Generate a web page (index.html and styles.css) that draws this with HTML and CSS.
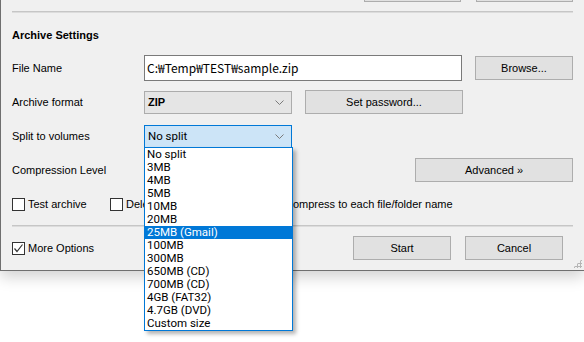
FILE: index.html
```html
<!DOCTYPE html>
<html lang="en">

<head>
    <meta charset="UTF-8">
    <meta name="viewport" content="width=device-width, initial-scale=1.0">
    <title>Archive Settings</title>
    <link rel="stylesheet" href="styles.css">
</head>

<body>
    <div class="dialog">
        <div class="content">
            <div class="top-buttons">
                <button class="btn">OK</button>
                <button class="btn">Close</button>
            </div>
            <div class="sep"></div>

            <h2 class="group-title">Archive Settings</h2>

            <div class="row">
                <span class="label">File Name</span>
                <div class="textbox">C:₩Temp₩TEST₩sample.zip</div>
                <button class="btn browse">Browse...</button>
            </div>
            <div class="row">
                <span class="label">Archive format</span>
                <div class="combo">
                    <span>ZIP</span>
                    <svg class="chevron" width="9" height="5" viewBox="0 0 9 5"><polyline points="0.5,0.5 4.5,4.5 8.5,0.5" /></svg>
                </div>
                <button class="btn password">Set password...</button>
            </div>
            <div class="row">
                <span class="label">Split to volumes</span>
                <div class="combo-wrap">
                    <div class="combo focused">
                        <span>No split</span>
                        <svg class="chevron" width="9" height="5" viewBox="0 0 9 5"><polyline points="0.5,0.5 4.5,4.5 8.5,0.5" /></svg>
                    </div>
                    <ul class="dropdown">
                        <li>No split</li>
                        <li>3MB</li>
                        <li>4MB</li>
                        <li>5MB</li>
                        <li>10MB</li>
                        <li>20MB</li>
                        <li class="selected">25MB (Gmail)</li>
                        <li>100MB</li>
                        <li>300MB</li>
                        <li>650MB (CD)</li>
                        <li>700MB (CD)</li>
                        <li>4GB (FAT32)</li>
                        <li>4.7GB (DVD)</li>
                        <li>Custom size</li>
                    </ul>
                </div>
            </div>
            <div class="row">
                <span class="label">Compression Level</span>
                <button class="btn advanced">Advanced »</button>
            </div>
            <div class="row checks">
                <label class="check test"><span class="box"></span>Test archive</label>
                <label class="check delete"><span class="box"></span>Delete</label>
                <label class="check each"><span class="box"></span>Compress to each file/folder name</label>
            </div>

            <div class="sep bottom-sep"></div>

            <div class="footer">
                <label class="check"><span class="box checked">
                    <svg width="11" height="11" viewBox="0 0 11 11"><polyline points="1.5,5.5 4,8.5 9.5,1.5" /></svg>
                </span>More Options</label>
                <div class="footer-buttons">
                    <button class="btn">Start</button>
                    <button class="btn">Cancel</button>
                </div>
            </div>
        </div>
        <div class="grip"></div>
    </div>
</body>

</html>
```

FILE: styles.css
```css
* {
    margin: 0;
    padding: 0;
    box-sizing: border-box;
}

body {
    min-height: 342px;
    background-color: #ffffff;
    font-family: "Liberation Sans", Arial, sans-serif;
    font-size: 11px;
    color: #000000;
}

.dialog {
    display: flow-root;
    position: relative;
    width: 584px;
    height: 271px;
    background-color: #f0f0f0;
    border-left: 1px solid #6f6f6f;
    border-bottom: 1px solid #6f6f6f;
    box-shadow: 0 6px 14px rgba(0, 0, 0, 0.18);
}

.content {
    width: 561px;
    margin-left: 11px;
}

.btn {
    height: 24px;
    width: 98px;
    background-color: #e1e1e1;
    border: 1px solid #adadad;
    font-family: "Liberation Sans", Arial, sans-serif;
    font-size: 11px;
    color: #000000;
}

.top-buttons {
    display: flex;
    justify-content: flex-end;
    gap: 15px;
    margin-top: -22px;
}

.top-buttons .btn {
    width: 97px;
}

.sep {
    height: 2px;
    margin-top: 9px;
    border-top: 1px solid #c6c6c6;
    border-bottom: 1px solid #dcdcdc;
}

.group-title {
    font-size: 11px;
    font-weight: bold;
    line-height: 14px;
    margin-top: 15px;
    margin-bottom: 9px;
}

.row {
    display: flex;
    align-items: center;
    height: 34px;
}

.label {
    width: 132px;
}

.textbox {
    width: 318px;
    height: 26px;
    background-color: #ffffff;
    border: 1px solid #7a7a7a;
    padding-left: 2px;
    line-height: 24px;
    font-family: "Noto Sans CJK KR", "Liberation Sans", sans-serif;
    font-size: 12px;
}

.browse {
    margin-left: 13px;
}

.combo {
    display: flex;
    align-items: center;
    justify-content: space-between;
    width: 148px;
    height: 23px;
    padding: 0 7px 0 3px;
    background-color: #e5e5e5;
    border: 1px solid #acacac;
    font-weight: bold;
}

.combo.focused {
    background-color: #cce4f7;
    border-color: #0078d7;
    font-weight: normal;
    font-family: Roboto, "Liberation Sans", sans-serif;
    font-size: 11.5px;
}

.chevron {
    fill: none;
    stroke: #7a7a7a;
    stroke-width: 1;
}

.password {
    width: 158px;
    margin-left: 13px;
}

.combo-wrap {
    position: relative;
}

.dropdown {
    position: absolute;
    top: 22px;
    left: 0;
    z-index: 10;
    width: 149px;
    list-style: none;
    background-color: #ffffff;
    border: 1px solid #0078d7;
    box-shadow: 3px 3px 4px rgba(0, 0, 0, 0.3);
    font-family: Roboto, "Liberation Sans", sans-serif;
    font-size: 11.5px;
}

.dropdown li {
    height: 13px;
    line-height: 13px;
    padding-left: 2px;
}

.dropdown li.selected {
    background-color: #0078d7;
    color: #ffffff;
}

.advanced {
    width: 158px;
    margin-left: auto;
}

.check {
    display: flex;
    align-items: center;
    gap: 3px;
    flex-shrink: 0;
    white-space: nowrap;
}

.box {
    display: flex;
    align-items: center;
    justify-content: center;
    width: 13px;
    height: 13px;
    background-color: #ffffff;
    border: 1px solid #333333;
}

.box svg {
    fill: none;
    stroke: #333333;
    stroke-width: 1.2;
}

.checks .test {
    width: 98px;
}

.checks .delete {
    width: 159px;
}

.bottom-sep {
    margin-top: 4px;
}

.footer {
    display: flex;
    align-items: center;
    margin-top: 9px;
    padding-right: 10px;
}

.footer-buttons {
    display: flex;
    gap: 14px;
    margin-left: auto;
}

.grip {
    position: absolute;
    right: 2px;
    bottom: 2px;
    width: 9px;
    height: 9px;
    background-image: radial-gradient(circle, #b5b5b5 1px, transparent 1.2px);
    background-size: 3px 3px;
    clip-path: polygon(100% 0, 100% 100%, 0 100%);
}
```
